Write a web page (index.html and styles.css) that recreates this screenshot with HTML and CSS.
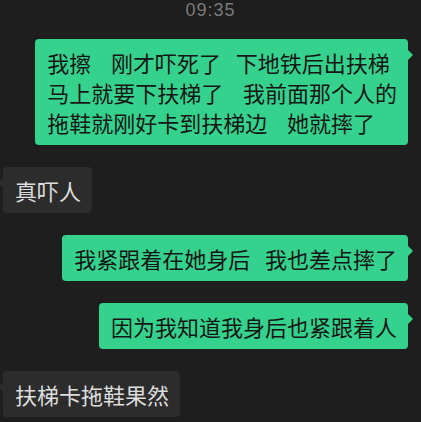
FILE: index.html
```html
<!DOCTYPE html>
<html lang="zh-CN">
<head>
  <meta charset="UTF-8">
  <title>聊天记录</title>
  <meta name="viewport" content="width=device-width, initial-scale=1.0">
  <link rel="stylesheet" href="styles.css">
</head>
<body>
  <div class="time">09:35</div>
  <div class="chat">
    <div class="msg me">
      <div class="bubble">我擦    刚才吓死了   下地铁后出扶梯<br>马上就要下扶梯了    我前面那个人的<br>拖鞋就刚好卡到扶梯边    她就摔了</div>
    </div>
    <div class="msg other">
      <div class="bubble">真吓人</div>
    </div>
    <div class="msg me">
      <div class="bubble">我紧跟着在她身后   我也差点摔了</div>
    </div>
    <div class="msg me">
      <div class="bubble">因为我知道我身后也紧跟着人</div>
    </div>
    <div class="msg other">
      <div class="bubble">扶梯卡拖鞋果然</div>
    </div>
  </div>
</body>
</html>
```

FILE: styles.css
```css
body {
  margin: 0;
  padding: 0;
  background: #1e1e1e;
  font-family: "Noto Sans CJK SC", "Noto Sans", sans-serif;
  overflow: hidden;
}
.time {
  height: 20px;
  line-height: 20px;
  margin-bottom: 19px;
  text-align: center;
  font-family: "Liberation Sans", Arial, sans-serif;
  font-size: 18px;
  letter-spacing: 1px;
  color: #7a7a7a;
}
.chat {
  display: flex;
  flex-direction: column;
  gap: 22px;
  padding: 0 13px 0 3px;
}
.msg {
  display: flex;
}
.msg.me {
  justify-content: flex-end;
}
.msg.other {
  justify-content: flex-start;
}
.bubble {
  position: relative;
  padding: 8px 11px 8px 12px;
  border-radius: 4px;
  font-size: 22px;
  line-height: 30px;
  white-space: pre;
}
.me .bubble {
  background: #35d28d;
  color: #161616;
}
.other .bubble {
  background: #2c2c2c;
  color: #dcdcdc;
}
.bubble::after {
  content: "";
  position: absolute;
  top: 11px;
  border-top: 5px solid transparent;
  border-bottom: 5px solid transparent;
}
.me .bubble::after {
  right: -5px;
  border-left: 5px solid #35d28d;
}
.other .bubble::after {
  left: -5px;
  border-right: 5px solid #2c2c2c;
}
```
